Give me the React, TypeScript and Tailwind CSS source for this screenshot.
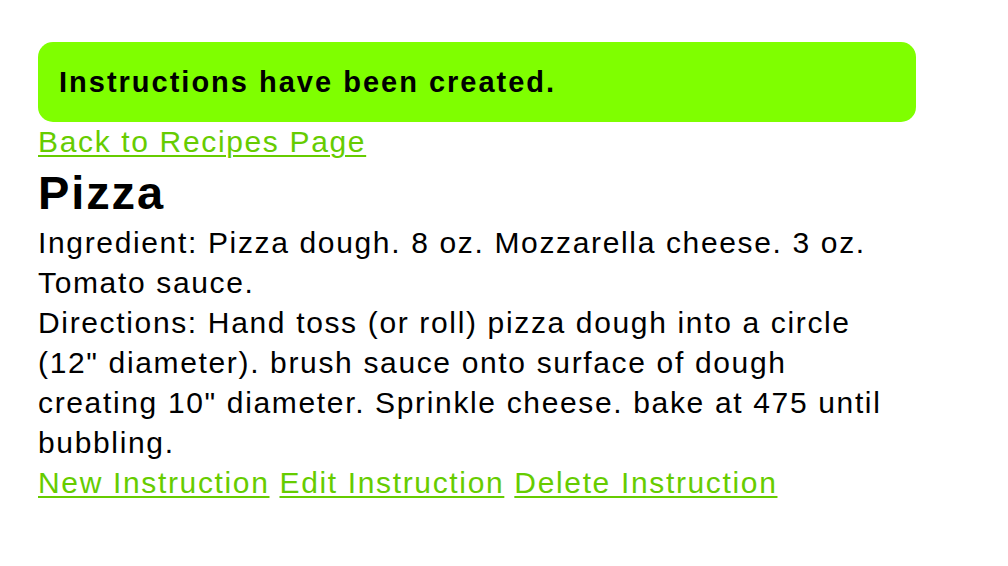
import React from "react";

const App = () => {
  return (
    <div className="min-h-screen bg-white font-['Liberation_Sans',Arial,sans-serif] text-black">
      <div className="pl-[38px] pt-[42px]">
        <div className="bg-[#7fff00] rounded-[15px] h-[80px] w-[878px] flex items-center pl-[21px]">
          <p className="text-[29px] font-bold tracking-[2px] leading-none">Instructions have been created.</p>
        </div>
        <div className="w-[874px] text-[30px] leading-[40px] tracking-[1.65px]">
          <a href="#" className="block w-fit text-[#66cc00] underline decoration-2 underline-offset-[3px]">
            Back to Recipes Page
          </a>
          <h1 className="text-[47px] font-bold leading-[61px] tracking-[1.9px]">Pizza</h1>
          <p>Ingredient: Pizza dough. 8 oz. Mozzarella cheese. 3 oz. Tomato sauce.</p>
          <p>
            Directions: Hand toss (or roll) pizza dough into a circle (12" diameter). brush sauce onto surface of dough creating 10" diameter. Sprinkle cheese. bake at 475 until bubbling.
          </p>
          <div className="text-[#66cc00]">
            <a href="#" className="underline decoration-2 underline-offset-[3px]">New Instruction</a>{" "}
            <a href="#" className="underline decoration-2 underline-offset-[3px]">Edit Instruction</a>{" "}
            <a href="#" className="underline decoration-2 underline-offset-[3px]">Delete Instruction</a>
          </div>
        </div>
      </div>
    </div>
  );
};

export default App;
